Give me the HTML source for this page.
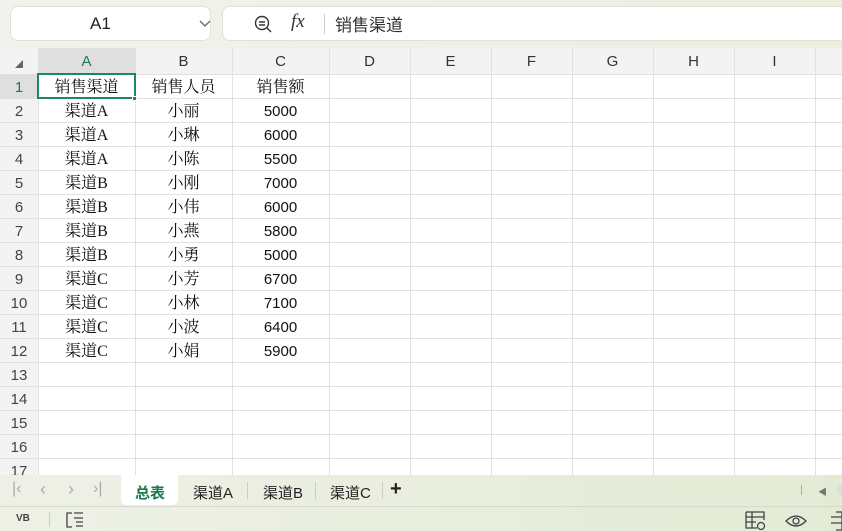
<!DOCTYPE html>
<html><head><meta charset="utf-8"><style>
*{margin:0;padding:0;box-sizing:border-box}
body{width:842px;height:531px;overflow:hidden;background:#fff;font-family:"Liberation Sans","Noto Sans CJK SC",sans-serif;position:relative}
.top{position:absolute;left:0;top:0;width:842px;height:48px;background:linear-gradient(90deg,#f1f2ec,#eaf0de)}
.box{position:absolute;top:6px;height:35px;background:#fff;border:1px solid #dfe2da;border-radius:8px}
.g{position:absolute;left:0;top:48px;width:842px;height:427px;overflow:hidden}
.hl{position:absolute;left:0;height:1px;width:842px;background:#e1e1e1}
.vl{position:absolute;top:0;width:1px;height:427px;background:#e1e1e1}
.ch{position:absolute;top:0;height:26px;line-height:28px;text-align:center;font-size:15px;color:#333;background:#f3f3f3}
.rh{position:absolute;left:0;width:38px;text-align:center;font-size:15px;color:#444;line-height:25px}
.c{position:absolute;height:24px;line-height:26px;text-align:center;font-size:16px;color:#111;font-family:"Liberation Serif","Noto Serif CJK SC",serif}
.n{font-family:"Liberation Sans",sans-serif;font-size:15px}
.tabs{position:absolute;left:0;top:475px;width:842px;height:31px;background:linear-gradient(90deg,#eef0e6,#e4ebd5)}
.st{position:absolute;left:0;top:506px;width:842px;height:25px;background:linear-gradient(90deg,#eef0e6,#e4ebd5);border-top:1px solid #d6dacd}
.t{position:absolute;top:7px;font-size:15px;color:#222}
</style></head><body>
<div class="top">
 <div class="box" style="left:10px;width:201px"><span style="position:absolute;left:79px;top:7px;font-size:17px;color:#222">A1</span>
 <svg style="position:absolute;left:188px;top:13px" width="12" height="8"><path d="M1 1l5 5 5-5" stroke="#666" fill="none" stroke-width="1.3"/></svg></div>
 <div class="box" style="left:222px;width:640px">
  <svg style="position:absolute;left:30px;top:7px" width="20" height="20"><circle cx="9" cy="9" r="6.5" stroke="#333" fill="none" stroke-width="1.4"/><path d="M6 8h6M6 11h6M14 14l4 4" stroke="#333" stroke-width="1.4"/></svg>
  <span style="position:absolute;left:68px;top:4px;font-size:19px;font-style:italic;font-family:'Liberation Serif',serif;color:#333">fx</span>
  <div style="position:absolute;left:101px;top:7px;width:1px;height:20px;background:#ccc"></div>
  <span style="position:absolute;left:112px;top:4px;font-size:17px;color:#333">销售渠道</span>
 </div>
</div>
<div class="g">
 <div class="ch" style="left:0;width:38px;background:#f3f3f3"><svg width="10" height="10" style="position:absolute;left:14px;top:11px"><path d="M9 1L9 9L1 9Z" fill="#666"/></svg></div>
 <div class="ch" style="left:38px;width:97px;background:#dfdfdf;color:#1a7a4a">A</div>
 <div class="ch" style="left:135px;width:97px">B</div>
 <div class="ch" style="left:232px;width:97px">C</div>
 <div class="ch" style="left:329px;width:81px">D</div>
 <div class="ch" style="left:410px;width:81px">E</div>
 <div class="ch" style="left:491px;width:81px">F</div>
 <div class="ch" style="left:572px;width:81px">G</div>
 <div class="ch" style="left:653px;width:81px">H</div>
 <div class="ch" style="left:734px;width:81px">I</div>
 <div class="ch" style="left:815px;width:40px"></div>
 <div style="position:absolute;left:0;top:26px;width:38px;height:401px;background:#f3f3f3"></div>
 <div style="position:absolute;left:0;top:26px;width:38px;height:24px;background:#dfdfdf"></div>
 <div class="vl" style="left:38px"></div><div class="vl" style="left:135px"></div><div class="vl" style="left:232px"></div><div class="vl" style="left:329px"></div><div class="vl" style="left:410px"></div><div class="vl" style="left:491px"></div><div class="vl" style="left:572px"></div><div class="vl" style="left:653px"></div><div class="vl" style="left:734px"></div><div class="vl" style="left:815px"></div>
 <div class="hl" style="top:26px"></div><div class="hl" style="top:50px"></div><div class="hl" style="top:74px"></div><div class="hl" style="top:98px"></div><div class="hl" style="top:122px"></div><div class="hl" style="top:146px"></div><div class="hl" style="top:170px"></div><div class="hl" style="top:194px"></div><div class="hl" style="top:218px"></div><div class="hl" style="top:242px"></div><div class="hl" style="top:266px"></div><div class="hl" style="top:290px"></div><div class="hl" style="top:314px"></div><div class="hl" style="top:338px"></div><div class="hl" style="top:362px"></div><div class="hl" style="top:386px"></div><div class="hl" style="top:410px"></div>
 <div class="rh" style="top:27px;color:#1a7a4a">1</div><div class="rh" style="top:51px">2</div><div class="rh" style="top:75px">3</div><div class="rh" style="top:99px">4</div><div class="rh" style="top:123px">5</div><div class="rh" style="top:147px">6</div><div class="rh" style="top:171px">7</div><div class="rh" style="top:195px">8</div><div class="rh" style="top:219px">9</div><div class="rh" style="top:243px">10</div><div class="rh" style="top:267px">11</div><div class="rh" style="top:291px">12</div><div class="rh" style="top:315px">13</div><div class="rh" style="top:339px">14</div><div class="rh" style="top:363px">15</div><div class="rh" style="top:387px">16</div><div class="rh" style="top:411px">17</div>
 <div class="c" style="left:38px;top:27px;width:97px">销售渠道</div><div class="c" style="left:135px;top:27px;width:97px">销售人员</div><div class="c" style="left:232px;top:27px;width:97px">销售额</div>
 <div class="c" style="left:38px;top:51px;width:97px">渠道A</div><div class="c" style="left:135px;top:51px;width:97px">小丽</div><div class="c n" style="left:232px;top:51px;width:97px">5000</div>
 <div class="c" style="left:38px;top:75px;width:97px">渠道A</div><div class="c" style="left:135px;top:75px;width:97px">小琳</div><div class="c n" style="left:232px;top:75px;width:97px">6000</div>
 <div class="c" style="left:38px;top:99px;width:97px">渠道A</div><div class="c" style="left:135px;top:99px;width:97px">小陈</div><div class="c n" style="left:232px;top:99px;width:97px">5500</div>
 <div class="c" style="left:38px;top:123px;width:97px">渠道B</div><div class="c" style="left:135px;top:123px;width:97px">小刚</div><div class="c n" style="left:232px;top:123px;width:97px">7000</div>
 <div class="c" style="left:38px;top:147px;width:97px">渠道B</div><div class="c" style="left:135px;top:147px;width:97px">小伟</div><div class="c n" style="left:232px;top:147px;width:97px">6000</div>
 <div class="c" style="left:38px;top:171px;width:97px">渠道B</div><div class="c" style="left:135px;top:171px;width:97px">小燕</div><div class="c n" style="left:232px;top:171px;width:97px">5800</div>
 <div class="c" style="left:38px;top:195px;width:97px">渠道B</div><div class="c" style="left:135px;top:195px;width:97px">小勇</div><div class="c n" style="left:232px;top:195px;width:97px">5000</div>
 <div class="c" style="left:38px;top:219px;width:97px">渠道C</div><div class="c" style="left:135px;top:219px;width:97px">小芳</div><div class="c n" style="left:232px;top:219px;width:97px">6700</div>
 <div class="c" style="left:38px;top:243px;width:97px">渠道C</div><div class="c" style="left:135px;top:243px;width:97px">小林</div><div class="c n" style="left:232px;top:243px;width:97px">7100</div>
 <div class="c" style="left:38px;top:267px;width:97px">渠道C</div><div class="c" style="left:135px;top:267px;width:97px">小波</div><div class="c n" style="left:232px;top:267px;width:97px">6400</div>
 <div class="c" style="left:38px;top:291px;width:97px">渠道C</div><div class="c" style="left:135px;top:291px;width:97px">小娟</div><div class="c n" style="left:232px;top:291px;width:97px">5900</div>
 <div style="position:absolute;left:37px;top:25px;width:99px;height:26px;border:2px solid #1a8a5a"></div>
 <div style="position:absolute;left:132px;top:48px;width:5px;height:5px;background:#1a8a5a;border:1px solid #fff"></div>
</div>
<div class="tabs">
 <span class="t" style="left:12px;color:#aaa;font-size:16px;top:5px">|&#8249;</span>
 <span class="t" style="left:40px;color:#aaa;font-size:18px;top:4px">&#8249;</span>
 <span class="t" style="left:68px;color:#aaa;font-size:18px;top:4px">&#8250;</span>
 <span class="t" style="left:93px;color:#aaa;font-size:16px;top:5px">&#8250;|</span>
 <div style="position:absolute;left:121px;top:0;width:57px;height:30px;background:#fff;border-radius:0 0 6px 6px"></div>
 <span class="t" style="left:135px;color:#1a7a4a;font-weight:bold">总表</span>
 <span class="t" style="left:193px">渠道A</span>
 <div style="position:absolute;left:247px;top:7px;width:1px;height:17px;background:#ccc"></div>
 <span class="t" style="left:263px">渠道B</span>
 <div style="position:absolute;left:315px;top:7px;width:1px;height:17px;background:#ccc"></div>
 <span class="t" style="left:330px">渠道C</span>
 <div style="position:absolute;left:382px;top:7px;width:1px;height:17px;background:#ccc"></div>
 <span class="t" style="left:390px;font-size:20px;font-weight:bold;top:3px">+</span>
 <div style="position:absolute;left:801px;top:10px;width:1px;height:10px;background:#aaa"></div>
 <span class="t" style="left:818px;font-size:9px;color:#777;top:10px">◀</span>
 <div style="position:absolute;left:837px;top:9px;width:10px;height:12px;border-radius:5px;background:#ddd"></div>
</div>
<div class="st">
 <span style="position:absolute;left:16px;top:6px;font-size:10px;color:#444;font-weight:bold">VB</span>
 <div style="position:absolute;left:49px;top:5px;width:1px;height:15px;background:#ccc"></div>
 <svg style="position:absolute;left:66px;top:5px" width="18" height="16"><path d="M6 1H1v14h5M8 6h9M10 10h7M10 14h7M8 1h9" stroke="#444" fill="none" stroke-width="1.3"/></svg>
 <svg style="position:absolute;left:745px;top:4px" width="22" height="20"><path d="M1 1h18v8M1 1v16h11M1 6h18M1 11h10M7 1v16" stroke="#444" fill="none" stroke-width="1.3"/><circle cx="16" cy="15" r="3.5" stroke="#444" fill="none" stroke-width="1.3"/></svg>
 <svg style="position:absolute;left:785px;top:5px" width="22" height="16"><path d="M1 9Q11 -1 21 9Q11 19 1 9Z" stroke="#444" fill="none" stroke-width="1.3"/><circle cx="11" cy="9" r="3" stroke="#444" fill="none" stroke-width="1.3"/></svg>
 <svg style="position:absolute;left:830px;top:4px" width="12" height="20"><path d="M6 1h6v18H6M1 6h11M1 12h11" stroke="#444" fill="none" stroke-width="1.3"/></svg>
</div>
</body></html>
